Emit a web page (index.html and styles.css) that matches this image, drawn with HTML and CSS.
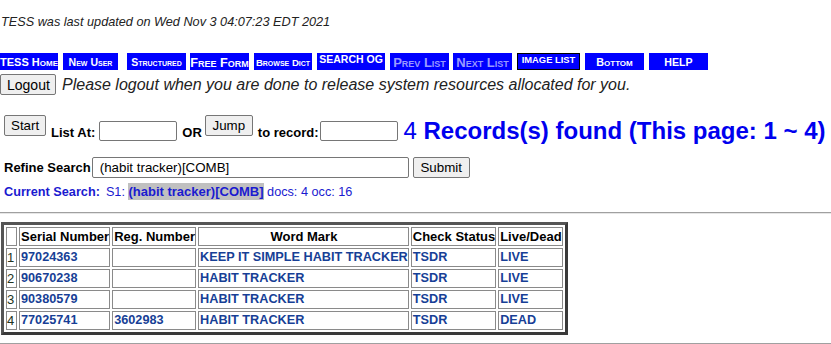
FILE: index.html
```html
<!DOCTYPE html>
<html lang="en">
<head>
    <meta charset="UTF-8">
    <title>TESS -- Search Results</title>
    <link rel="stylesheet" href="styles.css">
</head>
<body>
    <p class="updated">TESS was last updated on Wed Nov 3 04:07:23 EDT 2021</p>

    <div class="nav">
        <span class="nav-btn home">TESS Home</span>
        <span class="nav-btn newuser">New User</span>
        <span class="nav-btn struct">Structured</span>
        <span class="nav-btn free">Free Form</span>
        <span class="nav-btn browse">Browse Dict</span>
        <span class="nav-btn search">SEARCH OG</span>
        <span class="nav-btn prev off">Prev List</span>
        <span class="nav-btn next off">Next List</span>
        <span class="nav-btn image">IMAGE LIST</span>
        <span class="nav-btn bottom">Bottom</span>
        <span class="nav-btn help">HELP</span>
    </div>

    <div class="logout-row">
        <button class="btn logout">Logout</button>
        <span class="logout-msg">Please logout when you are done to release system resources allocated for you.</span>
    </div>

    <div class="jump-row">
        <button class="btn start">Start</button>
        <span class="lbl list-at">List At:</span>
        <input type="text" class="small-input list-input">
        <span class="lbl or">OR</span>
        <button class="btn jump">Jump</button>
        <span class="lbl to-rec">to record:</span>
        <input type="text" class="small-input rec-input">
        <span class="found">4 <b>Records(s) found (This page: 1 ~ 4)</b></span>
    </div>

    <div class="refine-row">
        <span class="lbl">Refine Search</span>
        <input type="text" class="refine-input" value="(habit tracker)[COMB]">
        <button class="btn submit">Submit</button>
    </div>

    <div class="current">
        <b class="cs-label">Current Search:</b>S1: <b class="hl">(habit tracker)[COMB]</b> docs: 4 occ: 16
    </div>

    <hr class="sep">

    <table class="results">
        <tr>
            <th></th>
            <th>Serial Number</th>
            <th>Reg. Number</th>
            <th>Word Mark</th>
            <th>Check Status</th>
            <th>Live/Dead</th>
        </tr>
        <tr>
            <td class="num">1</td>
            <td><a>97024363</a></td>
            <td></td>
            <td><a>KEEP IT SIMPLE HABIT TRACKER</a></td>
            <td><a>TSDR</a></td>
            <td><a>LIVE</a></td>
        </tr>
        <tr>
            <td class="num">2</td>
            <td><a>90670238</a></td>
            <td></td>
            <td><a>HABIT TRACKER</a></td>
            <td><a>TSDR</a></td>
            <td><a>LIVE</a></td>
        </tr>
        <tr>
            <td class="num">3</td>
            <td><a>90380579</a></td>
            <td></td>
            <td><a>HABIT TRACKER</a></td>
            <td><a>TSDR</a></td>
            <td><a>LIVE</a></td>
        </tr>
        <tr>
            <td class="num">4</td>
            <td><a>77025741</a></td>
            <td><a>3602983</a></td>
            <td><a>HABIT TRACKER</a></td>
            <td><a>TSDR</a></td>
            <td><a>DEAD</a></td>
        </tr>
    </table>

    <hr class="sep bottom-sep">
</body>
</html>
```

FILE: styles.css
```css
body {
    margin: 0;
    font-family: "Liberation Sans", Arial, sans-serif;
    color: #000;
    background: #fff;
}
.updated {
    margin: 0;
    padding: 15px 0 0 1px;
    font-size: 12.7px;
    line-height: 15px;
    font-style: italic;
    color: #222;
}

/* top navigation buttons */
.nav {
    display: flex;
    margin-top: 23px;
    height: 17px;
}
.nav-btn {
    display: block;
    width: 59px;
    height: 17px;
    margin-left: 5px;
    background-color: #0000ff;
    color: #fff;
    font-weight: bold;
    font-variant: small-caps;
    font-size: 11px;
    line-height: 19px;
    text-align: center;
    white-space: nowrap;
    overflow: hidden;
    box-sizing: border-box;
}
.nav-btn.home { width: 58px; margin-left: 0; }
.nav-btn.newuser { width: 55px; font-size: 10.5px; line-height: 18px; }
.nav-btn.struct { margin-left: 9px; font-size: 10.5px; line-height: 18px; }
.nav-btn.free { margin-left: 4px; font-size: 12.7px; line-height: 20px; }
.nav-btn.browse { width: 58px; font-size: 9.6px; }
.nav-btn.search {
    width: 68px;
    font-variant: normal;
    font-size: 10.5px;
    line-height: 13px;
}
.nav-btn.off { font-size: 13px; line-height: 20px; color: #9a9aff; }
.nav-btn.next { margin-left: 4px; }
.nav-btn.image {
    width: 63px;
    border: 1px solid #000;
    font-variant: normal;
    font-size: 9.4px;
    line-height: 11px;
}
.nav-btn.bottom { font-size: 10.8px; }
.nav-btn.help { font-variant: normal; font-size: 10.6px; line-height: 18px; }

/* buttons and inputs */
.btn {
    font-family: "Liberation Sans", Arial, sans-serif;
    font-size: 13.33px;
    height: 21px;
    padding: 0 6px;
    background-color: #efefef;
    border: 1px solid #767676;
    border-radius: 2px;
    color: #000;
}
.logout-row {
    display: flex;
    align-items: center;
    margin-top: 4px;
    height: 21px;
}
.btn.logout {
    width: 56px;
    font-size: 14px;
}
.logout-msg {
    margin-left: 6px;
    font-size: 16px;
    font-style: italic;
    color: #222;
}

.jump-row {
    display: flex;
    align-items: flex-start;
    margin-top: 20px;
    padding-left: 4px;
    height: 27px;
}
.lbl {
    font-size: 13px;
    font-weight: bold;
    line-height: 15px;
    white-space: nowrap;
}
.jump-row .lbl { margin-top: 10px; }
.btn.start { width: 42px; }
.list-at { margin-left: 5px; }
.small-input {
    width: 78px;
    height: 20px;
    margin: 6px 0 0 4px;
    box-sizing: border-box;
    border: 1px solid #767676;
    border-radius: 2px;
}
.or { margin-left: 5px; }
.btn.jump { width: 48px; margin-left: 3px; }
.to-rec { margin-left: 5px; }
.small-input.rec-input { margin-left: 2px; }
.found {
    margin: 2px 0 0 5px;
    font-size: 24px;
    line-height: 28px;
    color: #0000ee;
    white-space: nowrap;
}

.refine-row {
    display: flex;
    align-items: center;
    margin-top: 15px;
    padding-left: 4px;
    height: 21px;
}
.refine-input {
    width: 317px;
    height: 21px;
    margin-left: 1px;
    padding: 0 0 0 7px;
    box-sizing: border-box;
    border: 1px solid #767676;
    border-radius: 2px;
    font-family: "Liberation Sans", Arial, sans-serif;
    font-size: 13.33px;
}
.btn.submit { width: 57px; margin-left: 4px; }

.current {
    margin-top: 5px;
    padding-left: 4px;
    font-size: 12.7px;
    line-height: 18px;
    color: #1a1ad0;
}
.current .cs-label {
    margin-right: 6px;
}
.current .hl {
    font-size: 13px;
    background-color: #c0c0c0;
    padding: 1px 0;
}

.sep {
    margin: 11px 0 0;
    border: 0;
    border-top: 1px solid #a0a0a0;
    border-bottom: 1px solid #e6e6e6;
}
.bottom-sep { margin-top: 8px; }

/* results table */
.results {
    margin: 8px 0 0 1px;
    border: 3px solid #3a3a3a;
    border-top-color: #555;
    border-left-color: #555;
    border-spacing: 2px;
    font-size: 13px;
}
.results th, .results td {
    border: 1px solid #8a8a8a;
    padding: 0 0 0 1px;
    height: 17px;
    line-height: 17px;
    text-align: left;
    white-space: nowrap;
}
.results th {
    font-weight: bold;
    text-align: center;
}
.results th:nth-child(2), .results th:nth-child(3) {
    text-align: left;
}
.results td a {
    color: #173f96;
    font-weight: bold;
    font-size: 12.7px;
    vertical-align: top;
}
.results td.num {
    color: #223322;
    padding: 0;
    width: 9px;
}
```
